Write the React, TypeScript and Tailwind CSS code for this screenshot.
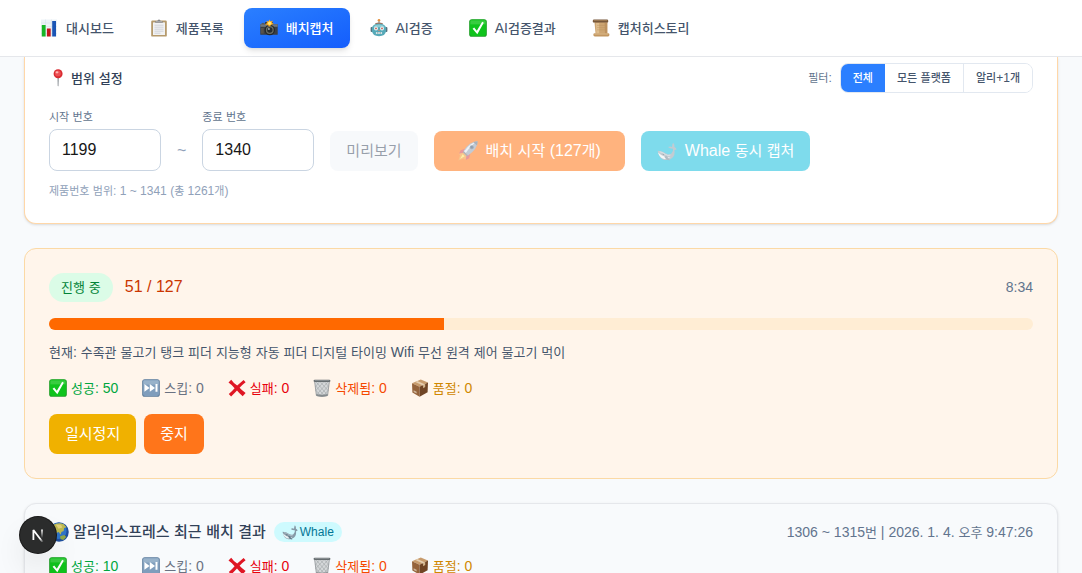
import React, { ReactNode } from 'react';
import clsx from 'clsx';

type IconName =
  | 'chart'
  | 'clipboard'
  | 'camera'
  | 'robot'
  | 'check'
  | 'scroll'
  | 'pin'
  | 'rocket'
  | 'whale'
  | 'skip'
  | 'cross'
  | 'trash'
  | 'box'
  | 'globe';

// All glyphs share an 18 unit grid
const ICONS: Record<IconName, ReactNode> = {
  chart: (
    <>
      <rect x="1" y="0.5" width="16" height="17" fill="#eef3f8" />
      <path d="M1 4h16M1 7.5h16M1 11h16M1 14.5h16M5.5 0.5v17M11.5 0.5v17" stroke="#d3dfeb" strokeWidth="0.5" />
      <rect x="1.8" y="6" width="3.8" height="11.5" fill="#17b526" />
      <rect x="6.9" y="9.5" width="3.8" height="8" fill="#c5161d" />
      <rect x="12.2" y="2" width="3.8" height="15.5" fill="#1b55b5" />
    </>
  ),
  clipboard: (
    <>
      <rect x="1.2" y="1.6" width="15.6" height="16" rx="1.2" fill="#b59a6c" />
      <rect x="3" y="3.4" width="12" height="12.6" fill="#f1f2f3" />
      <path d="M4.5 6.2h9M4.5 8.2h9M4.5 10.2h9M4.5 12.2h9M4.5 14.2h6" stroke="#c9cdd2" strokeWidth="0.8" />
      <path d="M5.2 3.8V2.2h2.2a1.6 1.6 0 0 1 3.2 0h2.2v1.6z" fill="#85878b" />
      <path d="M6 2.7h6" stroke="#c8c9cb" strokeWidth="0.6" />
    </>
  ),
  camera: (
    <>
      <path d="M0.3 5.3h4l1-2.2h7.2l1 2.2h4.2v10.4H0.3z" fill="#3a3e42" />
      <rect x="0.3" y="5.2" width="17.4" height="2.6" fill="#70777c" />
      <rect x="1.6" y="3.9" width="2.6" height="1.4" fill="#555b60" />
      <rect x="0.8" y="9" width="3" height="5.6" fill="#56524a" />
      <circle cx="9.8" cy="11" r="5.2" fill="#24282b" />
      <circle cx="9.8" cy="11" r="3.9" fill="#6b6f66" />
      <circle cx="9.8" cy="11" r="2.7" fill="#252b30" />
      <circle cx="8.9" cy="10" r="1" fill="#9ba5a8" />
      <path d="M9.5 0.6l1 1.8 2.2-.8-.7 2.1 1.8 1-2.1.9-2.2 2-2-1.6-2.4-.7 2.1-1.3-.8-2 2.1.5z" fill="#f9a71b" />
      <circle cx="9.6" cy="4.2" r="1.7" fill="#ffe672" />
    </>
  ),
  robot: (
    <>
      <rect x="8.4" y="1.8" width="1.2" height="3" fill="#8b9599" />
      <circle cx="9" cy="1.3" r="1.3" fill="#e5923e" />
      <path d="M5 4.6Q9 2.4 13 4.6v1H5z" fill="#9a7666" />
      <rect x="0.6" y="8" width="2.2" height="5" rx="0.9" fill="#55737f" />
      <rect x="15.2" y="8" width="2.2" height="5" rx="0.9" fill="#55737f" />
      <path d="M2 8.5Q3 4.7 9 4.7t7 3.8v3.8q-.6 4.9-7 4.9t-7-4.9z" fill="#56a9b8" />
      <path d="M3.2 8.2Q4.6 5.5 9 5.5t5.8 2.7z" fill="#8bcbd3" />
      <circle cx="6" cy="9.4" r="2" fill="#e7f6f6" />
      <circle cx="12" cy="9.4" r="2" fill="#e7f6f6" />
      <circle cx="6" cy="9.4" r="0.9" fill="#c95c4e" />
      <circle cx="12" cy="9.4" r="0.9" fill="#c95c4e" />
      <path d="M9 10.2l1 1.8H8z" fill="#d28572" />
      <rect x="5.8" y="13" width="6.4" height="1.9" rx="0.9" fill="#e3eeee" />
      <path d="M7.4 13v1.9M9 13v1.9M10.6 13v1.9" stroke="#44717c" strokeWidth="0.5" />
    </>
  ),
  check: (
    <>
      <rect x="0.2" y="0.2" width="17.6" height="17.6" rx="2.6" fill="#1c9a24" />
      <rect x="0.9" y="0.7" width="16.2" height="16.2" rx="2.2" fill="#0fc31c" />
      <path d="M1.4 1.4h15.2v4H1.4z" fill="#5bd55f" opacity="0.55" />
      <path d="M3.6 9.8l1.6-1.2 2.6 3.2 5.4-9 1.6.9-6.5 11.6z" fill="#fff" />
    </>
  ),
  scroll: (
    <>
      <path d="M2.4 2.4h13v12.8H3.6z" fill="#cda572" />
      <path d="M4 4h3.2v11H4.4z" fill="#dfbd8d" />
      <path d="M12.6 4h2.6v11h-2.2z" fill="#bd925f" />
      <rect x="0.8" y="0.6" width="15.4" height="3" rx="1.2" fill="#76573a" />
      <rect x="1.6" y="0.9" width="13.8" height="0.9" rx="0.4" fill="#a68358" />
      <rect x="1.4" y="14.2" width="16" height="3.2" rx="1.4" fill="#c2965f" />
      <path d="M2.4 15h13.8" stroke="#e4c79c" strokeWidth="0.8" />
      <path d="M5 6.4h8M5 8.6h8M5 10.8h8" stroke="#b98f5c" strokeWidth="0.4" />
    </>
  ),
  pin: (
    <>
      <path d="M8.5 8h1.3l-.3 8.6-.4.8-.4-.8z" fill="#858b91" />
      <circle cx="9.1" cy="4.8" r="4.5" fill="#d92b31" />
      <circle cx="8.9" cy="4.4" r="2.9" fill="#ec5054" />
      <ellipse cx="8" cy="3.3" rx="1.5" ry="1.1" fill="#ffb4b2" />
    </>
  ),
  rocket: (
    <>
      <path d="M4 9.8L0.5 11.8l1.4.9L0.3 17.6l5-1.8 1.2 1.2 1.7-4z" fill="#f28b1d" />
      <path d="M4.2 12l-2.4 4.2 4.2-2.4z" fill="#ffe14d" />
      <path d="M6.3 7L2.4 8.3 1 11.3l4.3-.8zM11 11.7l-1 3.8-3 1.6.7-4.5z" fill="#d3343b" />
      <path d="M17.6 0.3Q17.8 7.3 9 13L5 9Q10.2.5 17.6.3z" fill="#8798ad" />
      <path d="M17.3 0.5Q11.3 1.6 6.2 8.5L5 9l2 1.8Q12.2 3.2 17.3.5z" fill="#dfe6ee" />
      <path d="M17.6 0.3q.1 2-.6 3.8L13.7.9q1.9-.6 3.9-.6z" fill="#56667a" />
      <circle cx="12.4" cy="5.6" r="1.8" fill="#4c6178" />
      <circle cx="12.4" cy="5.6" r="1" fill="#24405f" />
      <path d="M5 9l4 4-1.1.7-3.6-3.6z" fill="#66717e" />
    </>
  ),
  whale: (
    <>
      <path
        d="M0.6 8.7Q4.7 8.7 8 11.2q2.7 1.7 4.8.2 2.2-2 1.6-4.5-2.8.1-4.5-1.4 1.9-1.1 3.6-.2.1-2.5 1-3.8 1.6 1.6 1.2 3.8 1.7.6 1.8 2.3-.7.5-1.8.4.8 4.7-2.1 7.2-2.9 2.6-7.2 1.8Q1.7 15.5.6 8.7z"
        fill="#869aa7"
      />
      <path d="M0.9 10.4q3.1 3.3 7.3 4.2 2.2.4 4-.2-3 2.4-6.5 1.6Q2.3 14.9.9 10.4z" fill="#edf2f4" />
      <path d="M2.4 9.7q3 .4 5.2 2.4 2 1.5 4.4.6" stroke="#b6c4cd" strokeWidth="0.9" fill="none" />
      <path d="M8.5 13.2l3.2 4.1q-3.2.3-5.1-3.2z" fill="#647b8a" />
      <circle cx="5.6" cy="12.2" r="0.5" fill="#202f3a" />
    </>
  ),
  skip: (
    <>
      <rect x="0.2" y="0.2" width="17.6" height="17.6" rx="2.6" fill="#587899" />
      <rect x="0.9" y="0.7" width="16.2" height="16.2" rx="2.2" fill="#7f9dbc" />
      <path d="M1.4 1.4h15.2v4.2H1.4z" fill="#a9bfd4" opacity="0.6" />
      <path d="M2.4 5l5.2 3.9-5.2 3.9zM7.8 5l5.2 3.9-5.2 3.9zM13.5 5h2v7.8h-2z" fill="#fff" />
    </>
  ),
  cross: (
    <path
      d="M0.5 3.4L3.2 0.7Q5.8 4.4 9.2 6.6 12 3.9 15.6 0.9l2 2.3Q13.9 6 11.6 8.8q2.3 2.6 6 5.3l-2.9 3.2Q11.4 14.6 9 11.6 6.5 14.4 3.1 17.5L0.8 15Q4.3 12 6.6 9.2 4.2 5.9 0.5 3.4z"
      fill="#df1624"
    />
  ),
  trash: (
    <>
      <path d="M1.6 2.2h14.8l-1.8 14.4q-5.6 1.6-11.2 0z" fill="#d4d7d9" />
      <path
        d="M3.2 3l10.8 12.4M2.8 7l8.6 9.8M3 11.4l4.4 5.2M7.4 3l7.6 8.6M11.6 3l4 4.4M14.8 3L4 15.4M15.2 7l-8.4 9.8M15 11.4l-4.2 5.2M10.6 3l-7.8 8.6M6.4 3L2.6 7.4"
        stroke="#969c9f"
        strokeWidth="0.5"
      />
      <path d="M1.7 3l1.7 13.5q5.6 1.6 11.2 0L16.3 3" stroke="#8b9194" strokeWidth="0.8" fill="none" />
      <path d="M3.3 14.9q5.7 1.5 11.4 0l-.3 2q-5.4 1.6-10.8 0z" fill="#858b8e" />
      <rect x="0.6" y="0.7" width="16.8" height="2.3" rx="1.1" fill="#666d70" />
      <path d="M1.8 1.4h14.4" stroke="#b1b5b7" strokeWidth="0.5" />
    </>
  ),
  box: (
    <>
      <path d="M1 4.3L9.8 0.4 17 3.6 8.6 7.7z" fill="#c79b6c" />
      <path d="M1 4.3l7.6 3.4v10L1.4 13.5z" fill="#95633b" />
      <path d="M17 3.6L8.6 7.7v10l8-4.5z" fill="#704525" />
      <path d="M4.2 2.9l7.9 3.5 2.1-1L6.3 1.9z" fill="#e5ceb0" />
      <path d="M12.1 6.1l2.1-1v3l-2.1 1.1z" fill="#d3b68f" />
      <path d="M2.6 11.3l3 1.5v1.7l-3-1.6z" fill="#cfb79d" />
    </>
  ),
  globe: (
    <>
      <circle cx="9" cy="9" r="8.8" fill="#1f4f9e" />
      <circle cx="8.4" cy="8" r="7.4" fill="#2f74c8" />
      <path d="M3.1 2.9Q8 .2 13 1.7l2.8 3-2.2.8-.4 2.7-2 .7-.8 2.5-1.6-2.3-2.2.8-1.1-2.6L3 6.9z" fill="#bcb951" />
      <path d="M6.2 2.3l4.6.2 1.2 2.4-3.4 1.2z" fill="#e1cf79" />
      <path d="M10 12.8l3.9-1 1.6 1.7-2.6 2.7-2.5-.9z" fill="#92a747" />
    </>
  ),
};

function Icon({ name, className = 'size-[18px]' }: { name: IconName; className?: string }) {
  return (
    <svg viewBox="0 0 18 18" aria-hidden="true" className={clsx('shrink-0', className)}>
      {ICONS[name]}
    </svg>
  );
}

const TEXT_SIZES = {
  xs: { latin: 'text-[12px]', hangul: 'text-[11px]' },
  sm: { latin: 'text-[14px]', hangul: 'text-[13px]' },
  base: { latin: 'text-[16px]', hangul: 'text-[15px]' },
};

interface TextProps {
  size: keyof typeof TEXT_SIZES;
  children: string;
}

// Hangul is set one step smaller so that it sits evenly beside latin letters and digits
function Text({ size, children }: TextProps) {
  const { latin, hangul } = TEXT_SIZES[size];
  return (
    <span className={latin}>
      {children.split(/([가-힣]+)/).map((part, i) =>
        i % 2 === 1 ? (
          <span key={i} className={hangul}>
            {part}
          </span>
        ) : (
          part
        ),
      )}
    </span>
  );
}

const NAV_ITEMS: { icon: IconName; label: string; active?: boolean }[] = [
  { icon: 'chart', label: '대시보드' },
  { icon: 'clipboard', label: '제품목록' },
  { icon: 'camera', label: '배치캡처', active: true },
  { icon: 'robot', label: 'AI검증' },
  { icon: 'check', label: 'AI검증결과' },
  { icon: 'scroll', label: '캡처히스토리' },
];

const FILTERS = ['전체', '모든 플랫폼', '알리+1개'];

function NavBar() {
  return (
    <header className="relative z-10 shrink-0 border-b border-gray-200 bg-white px-6 py-2">
      <nav className="flex gap-1">
        {NAV_ITEMS.map((item) => (
          <a
            key={item.label}
            href="#"
            className={clsx(
              'flex h-10 items-center gap-2 rounded-lg px-4 leading-5 font-medium whitespace-nowrap',
              item.active
                ? 'bg-gradient-to-br from-[#2b7fff] to-[#155dfc] text-white shadow-md'
                : 'text-slate-600',
            )}
          >
            <Icon name={item.icon} />
            <Text size="sm">{item.label}</Text>
          </a>
        ))}
      </nav>
    </header>
  );
}

interface NumberFieldProps {
  id: string;
  label: string;
  value: string;
}

function NumberField({ id, label, value }: NumberFieldProps) {
  return (
    <div>
      <label htmlFor={id} className="mb-1 block text-xs text-slate-500">
        <Text size="xs">{label}</Text>
      </label>
      <input
        id={id}
        type="text"
        inputMode="numeric"
        defaultValue={value}
        className="block h-[42px] w-28 rounded-lg border border-slate-300 bg-white px-3 text-base text-neutral-900"
      />
    </div>
  );
}

function RangeCard() {
  return (
    <section className="rounded-b-xl border border-t-0 border-orange-200 bg-white px-6 pt-1.5 pb-6 shadow-sm">
      <div className="mb-4 flex items-center justify-between">
        <h2 className="flex items-center gap-1 text-sm font-medium text-slate-700">
          <Icon name="pin" />
          <Text size="sm">범위 설정</Text>
        </h2>
        <div className="flex items-center gap-2 text-xs">
          <span className="text-slate-500">
            <Text size="xs">필터:</Text>
          </span>
          <div className="flex overflow-hidden rounded-lg border border-slate-200">
            {FILTERS.map((filter, i) => (
              <button
                key={filter}
                type="button"
                className={clsx(
                  'h-7 px-3 font-medium',
                  i === 0 ? 'bg-[#2b7fff] text-white' : 'bg-white text-slate-600',
                  i === 2 && 'border-l border-slate-200',
                )}
              >
                <Text size="xs">{filter}</Text>
              </button>
            ))}
          </div>
        </div>
      </div>

      <div className="flex items-end gap-4">
        <NumberField id="start-no" label="시작 번호" value="1199" />
        <span className="pb-2 text-slate-400">~</span>
        <NumberField id="end-no" label="종료 번호" value="1340" />
        <button type="button" disabled className="h-10 rounded-lg bg-slate-100 px-4 text-slate-700 opacity-50">
          <Text size="base">미리보기</Text>
        </button>
        <button
          type="button"
          disabled
          className="flex h-10 items-center gap-2 rounded-lg bg-[#ff6900] px-6 text-white opacity-50"
        >
          <Icon name="rocket" className="size-5" />
          <Text size="base">배치 시작 (127개)</Text>
        </button>
        <button
          type="button"
          disabled
          className="flex h-10 items-center gap-2 rounded-lg bg-[#00b8db] px-4 text-white opacity-50"
        >
          <Icon name="whale" className="size-5" />
          <Text size="base">Whale 동시 캡처</Text>
        </button>
      </div>

      <p className="mt-3 text-xs text-slate-400">
        <Text size="xs">제품번호 범위: 1 ~ 1341 (총 1261개)</Text>
      </p>
    </section>
  );
}

function Stats({ success }: { success: number }) {
  const stats: { icon: IconName; label: string; count: number; color: string }[] = [
    { icon: 'check', label: '성공', count: success, color: 'text-[#00a63e]' },
    { icon: 'skip', label: '스킵', count: 0, color: 'text-gray-500' },
    { icon: 'cross', label: '실패', count: 0, color: 'text-[#e7000b]' },
    { icon: 'trash', label: '삭제됨', count: 0, color: 'text-[#f54900]' },
    { icon: 'box', label: '품절', count: 0, color: 'text-[#d08700]' },
  ];

  return (
    <ul className="flex h-5 items-center gap-6 text-sm whitespace-nowrap">
      {stats.map((stat) => (
        <li key={stat.label} className={clsx('flex items-center gap-1', stat.color)}>
          <Icon name={stat.icon} />
          <Text size="sm">{`${stat.label}: ${stat.count}`}</Text>
        </li>
      ))}
    </ul>
  );
}

function ProgressCard() {
  const done = 51;
  const total = 127;

  return (
    <section className="rounded-xl border border-[#fbd9a5] bg-[#fff5eb] p-6">
      <div className="mb-4 flex items-center justify-between">
        <div className="flex items-center gap-3">
          <span className="rounded-full bg-green-100 px-3 py-1 text-sm text-green-700">
            <Text size="sm">진행 중</Text>
          </span>
          <span className="text-[#ca3500]">
            {done} / {total}
          </span>
        </div>
        <span className="text-sm text-slate-500">8:34</span>
      </div>
      <div className="mb-3 h-3 overflow-hidden rounded-full bg-[#ffedd4]">
        <div className="h-full bg-[#ff6900]" style={{ width: `${(done / total) * 100}%` }} />
      </div>
      <p className="mb-4 text-sm text-slate-600">
        <Text size="sm">
          현재: 수족관 물고기 탱크 피더 지능형 자동 피더 디지털 타이밍 Wifi 무선 원격 제어 물고기 먹이
        </Text>
      </p>
      <Stats success={50} />
      <div className="mt-4 flex gap-2">
        <button type="button" className="h-10 rounded-lg bg-[#f0b100] px-4 text-white">
          <Text size="base">일시정지</Text>
        </button>
        <button type="button" className="h-10 rounded-lg bg-[#ff751a] px-4 text-white">
          <Text size="base">중지</Text>
        </button>
      </div>
    </section>
  );
}

function ResultCard() {
  return (
    <section className="rounded-xl border border-gray-200 bg-slate-50 px-6 py-4 shadow-sm">
      <div className="mb-3 flex items-center justify-between">
        <div className="flex items-center gap-2">
          <h2 className="flex items-center gap-1 text-base font-medium text-slate-700">
            <Icon name="globe" className="size-5" />
            <Text size="base">알리익스프레스 최근 배치 결과</Text>
          </h2>
          <span className="flex items-center gap-0.5 rounded-full bg-cyan-100 px-2 py-0.5 text-xs text-cyan-700">
            <Icon name="whale" className="size-4" />
            Whale
          </span>
        </div>
        <span className="text-sm text-slate-500">
          <Text size="sm">1306 ~ 1315번 | 2026. 1. 4. 오후 9:47:26</Text>
        </span>
      </div>
      <Stats success={10} />
    </section>
  );
}

function DevToolsButton() {
  return (
    <button
      type="button"
      aria-label="Next.js Dev Tools"
      className="fixed bottom-5 left-5 z-20 flex size-9 items-center justify-center rounded-full bg-[#2b2c2c] shadow-[0_0_0_1px_#171717,0_16px_32px_-8px_rgba(0,0,0,0.24)]"
    >
      <svg width="14" height="14" viewBox="0 0 14 14" fill="none" strokeWidth="1.8">
        <defs>
          <linearGradient id="stem" x1="11" y1="1" x2="11" y2="10" gradientUnits="userSpaceOnUse">
            <stop stopColor="#fff" />
            <stop offset="1" stopColor="#fff" stopOpacity="0" />
          </linearGradient>
          <linearGradient id="diagonal" x1="3" y1="2" x2="12" y2="14" gradientUnits="userSpaceOnUse">
            <stop offset="0.7" stopColor="#fff" />
            <stop offset="1" stopColor="#fff" stopOpacity="0.1" />
          </linearGradient>
        </defs>
        <path d="M2.4 12V2L11.6 14" stroke="url(#diagonal)" strokeLinejoin="bevel" />
        <path d="M11 1.5V10" stroke="url(#stem)" />
      </svg>
    </button>
  );
}

export default function App() {
  return (
    <div
      lang="ko"
      className="flex h-screen flex-col overflow-hidden bg-slate-50 font-['Liberation_Sans','Noto_Sans_CJK_KR',sans-serif]"
    >
      <NavBar />
      <main className="flex flex-col gap-6 px-6">
        <RangeCard />
        <ProgressCard />
        <ResultCard />
      </main>
      <DevToolsButton />
    </div>
  );
}
